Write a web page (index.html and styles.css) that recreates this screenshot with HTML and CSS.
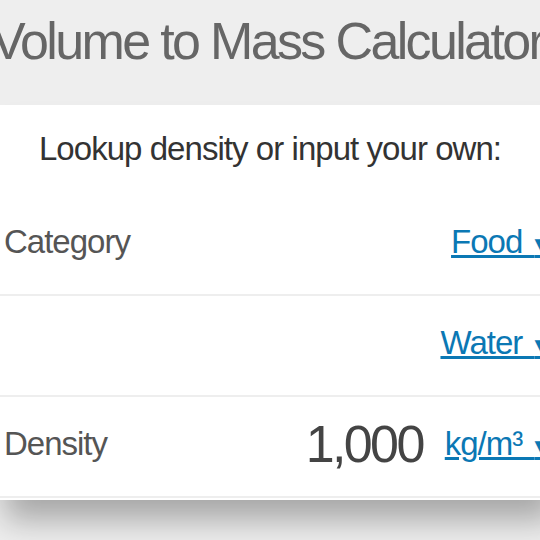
FILE: index.html
```html
<!DOCTYPE html>
<html>
<head>
<meta charset="utf-8">
<link rel="stylesheet" href="styles.css">
</head>
<body>
<div class="page">
  <header class="header">
    <h1 class="title">Volume to Mass Calculator</h1>
  </header>
  <section class="card">
    <p class="intro">Lookup density or input your own:</p>
    <div class="row">
      <span class="label">Category</span>
      <a class="pick" href="#">Food <span class="caret">▾</span></a>
    </div>
    <div class="row">
      <span class="label"></span>
      <a class="pick" href="#">Water <span class="caret">▾</span></a>
    </div>
    <div class="row">
      <span class="label">Density</span>
      <span class="value-group">
        <span class="value">1,000</span>
        <a class="pick" href="#">kg/m³ <span class="caret">▾</span></a>
      </span>
    </div>
  </section>
</div>
</body>
</html>
```

FILE: styles.css
```css
html, body {
  margin: 0;
  padding: 0;
  background: #eeeeee;
  overflow: hidden;
  height: 540px;
}
body {
  font-family: "Liberation Sans", Arial, sans-serif;
}
.page {
  width: 560px;
}
.header {
  width: 546px;
  height: 105px;
  box-sizing: border-box;
  padding-top: 11px;
  overflow: hidden;
}
.title {
  margin: 0 -14px 0 -26px;
  font-weight: normal;
  font-size: 52px;
  line-height: 60px;
  letter-spacing: -2.65px;
  color: #666666;
  text-align: center;
  white-space: nowrap;
}
.card {
  background: #ffffff;
  padding-bottom: 2px;
  box-shadow: 0 25px 30px -5px rgba(0, 0, 0, 0.3);
}
.intro {
  margin: 0;
  padding: 25px 0 27px;
  width: 540px;
  font-size: 33px;
  line-height: 38px;
  letter-spacing: -0.95px;
  color: #333333;
  text-align: center;
}
.row {
  display: flex;
  justify-content: space-between;
  align-items: center;
  box-sizing: border-box;
  height: 101px;
  border-bottom: 2px solid #eeeeee;
  padding: 0 13px 5px 4px;
}
.label {
  font-size: 33px;
  letter-spacing: -1px;
  color: #555555;
}
.pick {
  font-size: 33px;
  letter-spacing: -1px;
  word-spacing: 4px;
  color: #0b78b4;
  text-decoration: underline;
  white-space: nowrap;
}
.caret {
  font-family: "DejaVu Sans", sans-serif;
  font-size: 27px;
}
.value-group {
  display: flex;
  align-items: center;
  gap: 22px;
}
.value {
  font-size: 52px;
  letter-spacing: -2.6px;
  color: #444444;
}
```
